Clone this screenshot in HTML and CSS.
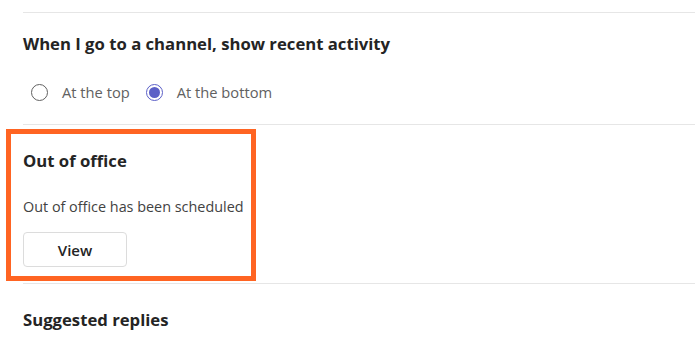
FILE: index.html
```html
<!DOCTYPE html>
<html lang="en">
<head>
<meta charset="utf-8">
<title>Settings</title>
<link rel="stylesheet" href="styles.css">
</head>
<body>
<main class="settings">
  <section class="section section-activity">
    <h2 class="section-title">When I go to a channel, show recent activity</h2>
    <div class="radio-group">
      <label class="radio">
        <span class="radio-dot"></span>
        <span class="radio-label">At the top</span>
      </label>
      <label class="radio radio-checked">
        <span class="radio-dot"></span>
        <span class="radio-label">At the bottom</span>
      </label>
    </div>
  </section>
  <section class="section section-ooo">
    <div class="highlight"></div>
    <h2 class="section-title">Out of office</h2>
    <p class="section-text">Out of office has been scheduled</p>
    <button class="btn" type="button">View</button>
  </section>
  <section class="section section-replies">
    <h2 class="section-title">Suggested replies</h2>
  </section>
</main>
</body>
</html>
```
FILE: styles.css
```css
html, body {
  margin: 0;
  padding: 0;
  background: #ffffff;
}

body {
  font-family: "Open Sans", "Noto Sans", "Liberation Sans", sans-serif;
  color: #242424;
  width: 695px;
  height: 339px;
  overflow: hidden;
}

.settings {
  padding-top: 12px;
  padding-left: 23px;
}

.section {
  position: relative;
  border-top: 1px solid #e6e6e6;
}

.section-title {
  margin: 0;
  font-size: 16.7px;
  line-height: 22px;
  font-weight: 700;
  color: #242424;
}

.section-activity {
  padding: 20px 0 22px;
}

.radio-group {
  display: flex;
  align-items: center;
  gap: 16px;
  margin-top: 27px;
  margin-left: 8px;
}

.radio {
  display: flex;
  align-items: center;
  gap: 14px;
  height: 20px;
}

.radio-dot {
  box-sizing: border-box;
  width: 17px;
  height: 17px;
  border-radius: 50%;
  border: 1px solid #616161;
  display: flex;
  align-items: center;
  justify-content: center;
}

.radio-checked .radio-dot {
  border-color: #5b5fc7;
}

.radio-checked .radio-dot::after {
  content: "";
  width: 11px;
  height: 11px;
  border-radius: 50%;
  background: #5b5fc7;
}

.radio-label {
  font-size: 14.7px;
  line-height: 20px;
  color: #616161;
}

.section-ooo {
  padding: 25px 0 16px;
}

.section-text {
  margin: 25px 0 0;
  font-size: 14.4px;
  line-height: 20px;
  color: #424242;
}

.btn {
  display: block;
  box-sizing: border-box;
  margin-top: 15px;
  width: 104px;
  height: 35px;
  border: 1px solid #dcdcdc;
  border-radius: 4px;
  background: #ffffff;
  font-family: inherit;
  font-size: 15px;
  font-weight: 600;
  color: #242424;
  padding: 0;
}

.highlight {
  position: absolute;
  left: -17px;
  top: 4px;
  width: 250px;
  height: 152px;
  box-sizing: border-box;
  border: 5px solid #ff6422;
  pointer-events: none;
}

.section-replies {
  padding-top: 25px;
}
```
